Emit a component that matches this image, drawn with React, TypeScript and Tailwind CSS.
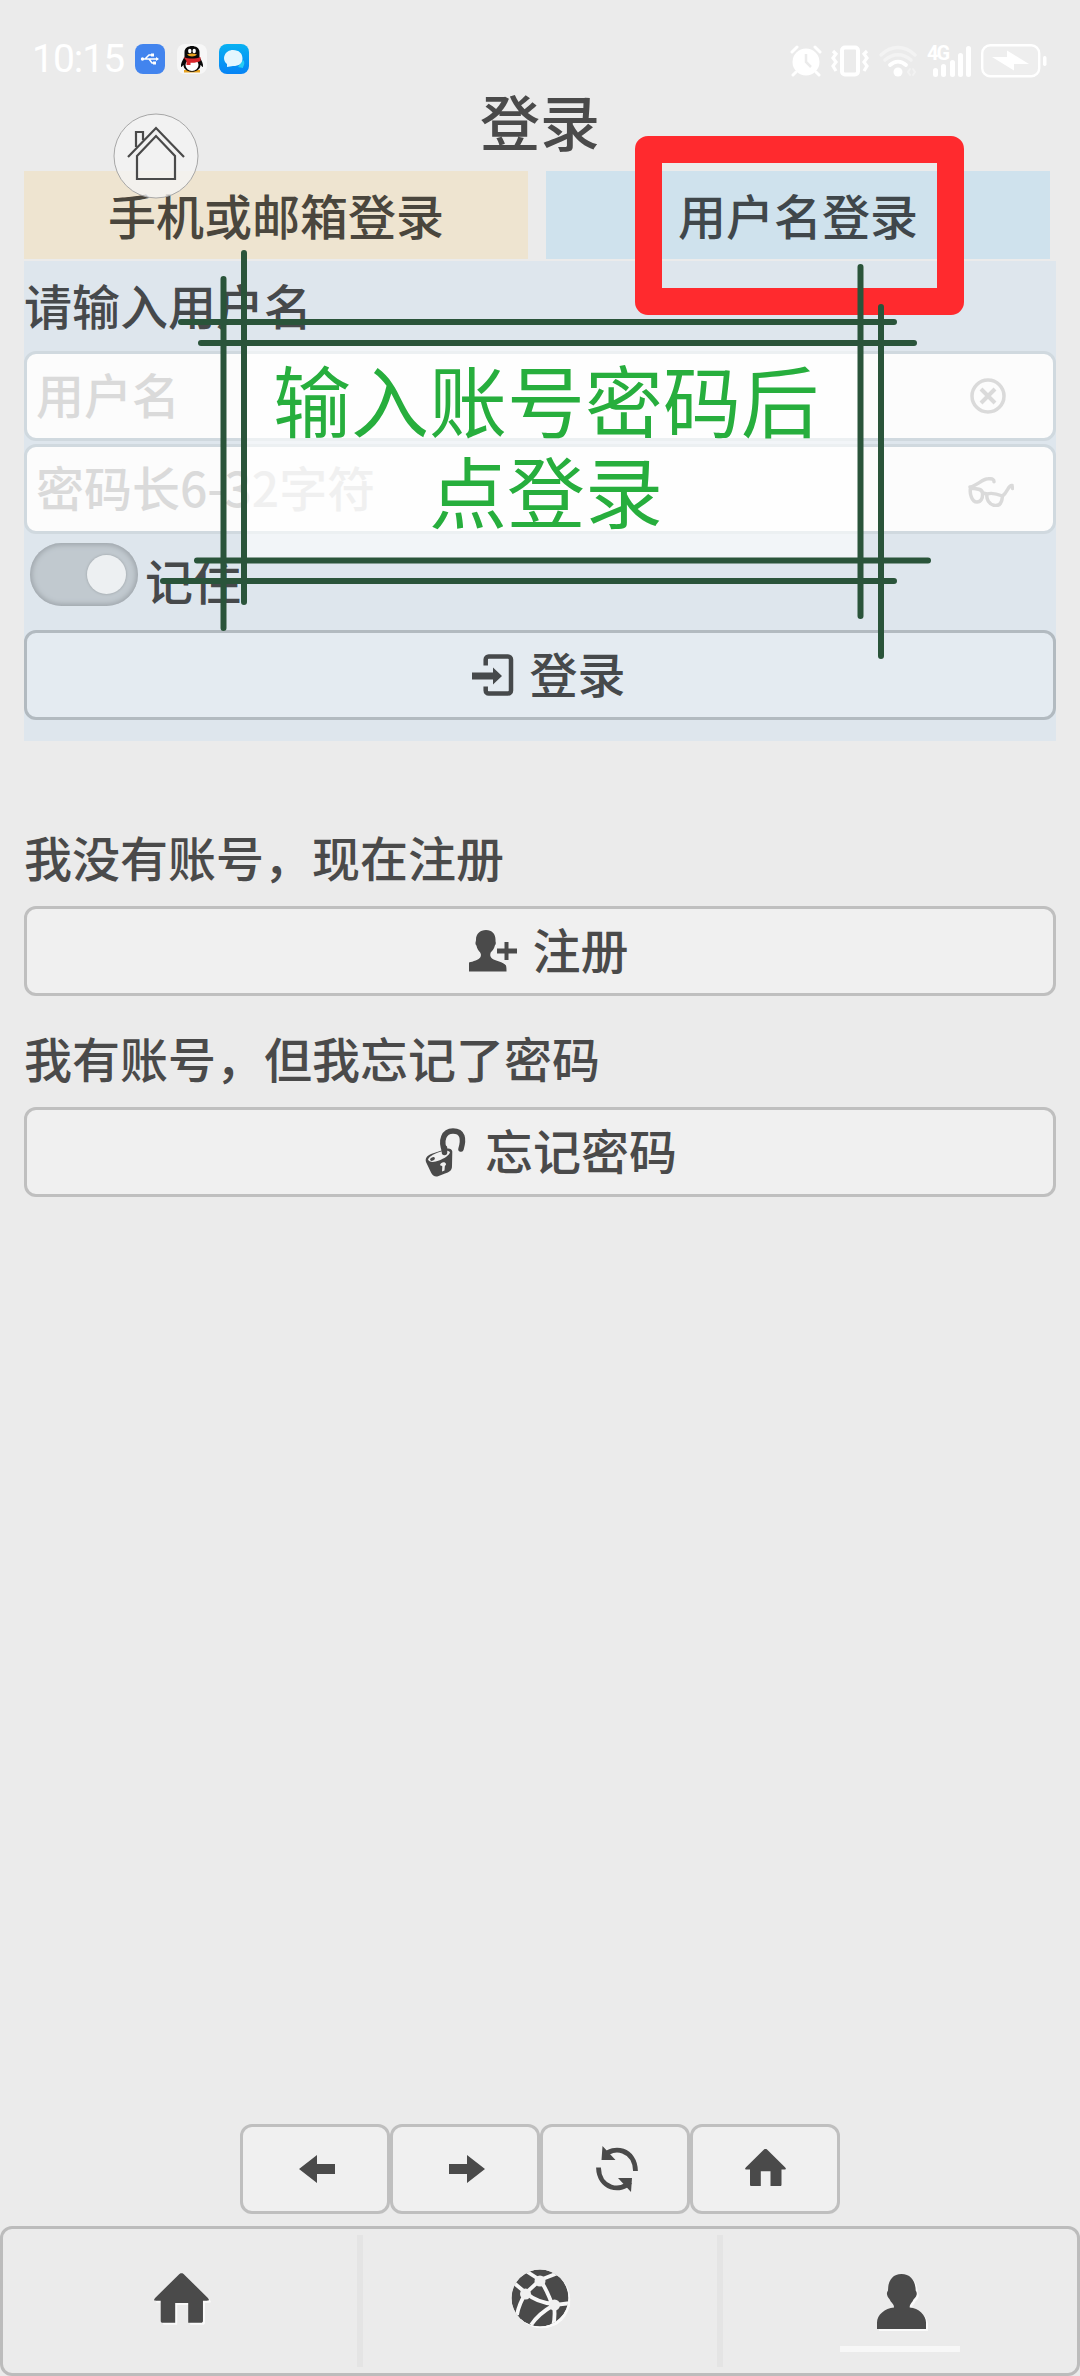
import type { ReactNode } from "react";

const HomeIcon = ({ className }: { className: string }) => (
  <svg viewBox="0 0 41 37" className={className} fill="currentColor">
    <path d="M20.500 0c1 0 1.600.5 2.300 1.300L40 18.300c1.400 1.500 1.200 2.200-.5 2.200H36.500V35.500c0 1-.5 1.500-1.500 1.500H25.500V22.200H15.800V37H6.500C5.500 37 5 36.500 5 35.500V20.500H1.500C-.2 20.500-.4 19.800 1 18.300L18.200 1.300C19 .5 19.500 0 20.500 0Z" />
  </svg>
);

const EnterIcon = () => (
  <svg viewBox="0 0 42 42" className="h-[42px] w-[42px]">
    <path d="M13.700 11.500V5.500a3 3 0 0 1 3-3H36a3 3 0 0 1 3 3v31a3 3 0 0 1-3 3H16.700a3 3 0 0 1-3-3v-4" fill="none" stroke="currentColor" strokeWidth="4.500" />
    <path d="M0 18.500h21v-5l9 8.500-9 8.500v-5H0Z" fill="currentColor" />
  </svg>
);

const AddUserIcon = () => (
  <svg viewBox="0 0 48 42" className="h-[42px] w-12" fill="currentColor">
    <path d="M17 0c6 0 9.500 4 9.500 9.500 0 1.300 0 2 .3 3 .2 1.500-.5 2.500-1 3.200-.6 2.800-2.300 5-4 6.500-1 2.300-.6 4.200.7 5.800 3.500 3.500 12 3.500 14.500 7.500.5 2 .5 3.500.5 6H0v-9c4-1 10-2.500 11.500-5.500.7-1.700.6-3.200-.5-4.800-1.500-1.500-3-3.500-3.500-6.500-.7-.7-1.200-1.700-1-3.200.3-1 .5-1.700.5-3C7 4 11 0 17 0Z" />
    <path d="M35.500 12h4v6.500H48v5h-8.500V30h-4v-6.500H28v-5h7.500Z" />
  </svg>
);

const LockIcon = () => (
  <svg viewBox="0 0 42 49" className="h-[49px] w-[42px]">
    <path d="M20 24C15 12 19 3 28 3c10 0 11 8 8 18" fill="none" stroke="currentColor" strokeWidth="5.500" strokeLinecap="round" />
    <path d="M1 34C0 30 2 28 6 26l15-5c3-1 6 0 6.300 2.500L27 38c0 5-3 6-7 7.500l-7 2.700c-3 .8-5.500-.7-7-3.700Z" fill="currentColor" />
    <path d="M3 31.500c1-3 5-5 10-7 6-2 11-2.500 12 0-1 3-6 6-11 8s-10 2-11-1Z" fill="#f0f0f0" />
    <ellipse cx="7.500" cy="31" rx="2.600" ry="1.600" transform="rotate(-25 7.500 31)" fill="currentColor" />
    <path d="M19.500 20v4.500" stroke="currentColor" strokeWidth="5.500" strokeLinecap="round" />
    <path d="M15 37c1-3.500 5.500-3.500 6-1 .2 1-1 1.500-1.200 2.500l-.3 4-2.500 1 .3-5c0-1-1.800-.5-2.300-1.500Z" fill="#f0f0f0" />
  </svg>
);

const ArrowIcon = ({ className = "" }: { className?: string }) => (
  <svg viewBox="0 0 36 28" className={`ml-1 h-7 w-9 ${className}`} fill="currentColor">
    <path d="M0 14 18 0v9h18v10H18v9Z" />
  </svg>
);

const RefreshIcon = () => (
  <svg viewBox="0 0 42 46" className="ml-[3px] h-[46px] w-[42px]">
    <path d="M8 10C17-1 39 3 39.500 25M34 36C25 47 3 43 2.500 21.500" fill="none" stroke="currentColor" strokeWidth="4.800" />
    <path d="M6.500 0 5.500 14h14ZM35 46l1-14H22Z" fill="currentColor" />
  </svg>
);

const GlobeIcon = () => (
  <svg viewBox="0 0 58 58" className="h-[58px] w-[58px] drop-shadow-[2px_2px_0_#fafafa]">
    <defs>
      <clipPath id="globe">
        <circle cx="29" cy="29" r="28.500" />
      </clipPath>
    </defs>
    <g clipPath="url(#globe)">
      <circle cx="29" cy="29" r="28.500" fill="currentColor" />
      <g fill="none" stroke="#f7f7f7" strokeWidth="3.800">
        <path d="M15 2 29 11 47 4M29 11 15 24 3 14M15 24C9 33 7 40 6 46M15 24c8 7 16 10 28 11M29 11c6 8 9 16 12 24M60 34 43 36C34 41 26 47 20 56M43 36c1 8 1 14-1 22M43 36M60 38C56 46 51 50 46 54" />
      </g>
      <circle cx="29" cy="12" r="5.500" fill="#f0f0f0" />
      <circle cx="14.500" cy="25" r="5.500" fill="#f0f0f0" />
      <circle cx="43.500" cy="36" r="5.500" fill="#f0f0f0" />
    </g>
  </svg>
);

const PersonIcon = () => (
  <svg viewBox="0 0 49 55" className="ml-[3px] h-[55px] w-[49px] drop-shadow-[2px_2px_0_#fafafa]" fill="currentColor">
    <path d="M24.500 0C33 0 38.500 6 38.700 16.500c.5 1 1.300 2 1 4-.5 3-3 4-4 6.500-1 2-3 3-3 6.500 9 .5 16.300 8 16.300 15V55H0v-6.500C0 41 8 34 17 33.500c0-3.500-2.500-4.500-3.500-6.500-1-2.500-3-3.500-3.500-6.500-.3-2 .5-3 1-4C11 6 16 0 24.500 0Z" />
  </svg>
);

const StatusBar = () => (
  <div className="flex h-[78px] items-end justify-between pl-8 pr-[33px] text-white">
    <div className="flex items-center">
      <span className="w-[103px] font-[Roboto] text-[39px] leading-[38px] font-normal tracking-[-1px]">10:15</span>
      <svg viewBox="0 0 30 30" className="h-[30px] w-[30px]">
        <rect width="30" height="30" rx="8" fill="#4284ee" />
        <g fill="none" stroke="#fff" strokeWidth="1.500">
          <path d="M7 15h16M10 15l4-4h3M14 15l3 4h2" />
        </g>
        <circle cx="7.500" cy="15" r="1.700" fill="#fff" />
        <path d="m21 13 3 2-3 2Z" fill="#fff" />
        <rect x="16" y="9.500" width="3" height="3" fill="#fff" />
        <rect x="18" y="17.500" width="3" height="3" fill="#fff" />
      </svg>
      <svg viewBox="0 0 30 30" className="ml-3 h-[30px] w-[30px]">
        <rect width="30" height="30" rx="8" fill="#f7f7f7" />
        <path d="M7 26h16v2.500H7Z" fill="#e8a321" />
        <path d="M7.500 8c0-8 15-8 15 0v5c2 3 4 7 3.500 10-1 0-2-2-2.500-2 0 9-17 9-17 0-.5 0-1.500 2-2.500 2C3.500 20 5.500 16 7.500 13Z" fill="#090909" />
        <ellipse cx="15" cy="21" rx="6.500" ry="6" fill="#fff" />
        <ellipse cx="12.800" cy="7" rx="1.700" ry="2.200" fill="#fff" />
        <ellipse cx="17.200" cy="7" rx="1.700" ry="2.200" fill="#fff" />
        <path d="M10 10.500c3-1.500 7-1.500 10 0-2 2.500-8 2.500-10 0Z" fill="#e8a321" />
        <path d="M6.500 13c5 2 12 2 17 0v4c-3 1.500-7 2-10 1.700V21h-4v-4Z" fill="#d8262b" />
      </svg>
      <svg viewBox="0 0 30 30" className="ml-3 h-[30px] w-[30px]">
        <defs>
          <linearGradient id="chat" x2="0" y2="1">
            <stop stopColor="#08b1f2" />
            <stop offset="1" stopColor="#0683f5" />
          </linearGradient>
        </defs>
        <rect width="30" height="30" rx="8" fill="url(#chat)" />
        <path d="M24 16c3 3 0 6 0 8l-5-1Z" fill="#27cdf4" />
        <path d="M14 6c6 0 9.500 3.500 9.500 8.500S20 22 14 22l-6 1v-3c-6-5-2-14 6-14Z" fill="#e4f6fe" />
      </svg>
    </div>
    <div className="flex items-center">
      <svg viewBox="0 0 32 32" className="h-8 w-8">
        <circle cx="16" cy="17" r="13.500" fill="#fff" />
        <path d="m2 7 5-5M30 7l-5-5M6 27l-3 3M26 27l3 3" stroke="#fff" strokeWidth="3" strokeLinecap="round" />
        <path d="M16 9v8l5 5" fill="none" stroke="#ebebeb" strokeWidth="2.500" />
      </svg>
      <svg viewBox="0 0 38 32" className="ml-[9px] h-8 w-[38px]" fill="none" stroke="#fff">
        <rect x="11" y="2.500" width="16" height="27" rx="3" strokeWidth="4" />
        <path d="m2 6 3 3-3 4 3 4-3 4 3 5M36 6l-3 3 3 4-3 4 3 4-3 5" strokeWidth="3.200" />
      </svg>
      <svg viewBox="0 0 40 32" className="ml-[9px] h-8 w-10" fill="none" strokeLinecap="round">
        <path d="M3 10C13 0 27 0 37 10M7 15c8-7 18-7 26 0" stroke="#f3f3f3" strokeWidth="3.500" />
        <path d="M12 20c5-4.500 11-4.500 16 0" stroke="#fff" strokeWidth="3.800" />
        <circle cx="20" cy="27" r="4.500" fill="#fff" />
        <path d="m32 24-2 3 2 3m3-6 2 3-2 3" stroke="#f2f2f2" strokeWidth="2" />
      </svg>
      <div className="relative ml-[9px] h-8 w-[45px]">
        <span className="absolute left-0 top-0 font-[Roboto] text-[20px] font-bold leading-4 tracking-[-2px]">4G</span>
        <div className="flex h-8 items-end gap-[3.300px] pl-[6px]">
          <i className="h-[9px] w-[5px] rounded-full bg-white" />
          <i className="h-[13px] w-[5px] rounded-full bg-white" />
          <i className="h-[17px] w-[5px] rounded-full bg-white" />
          <i className="h-6 w-[5px] rounded-full bg-white" />
          <i className="h-[31px] w-[5px] rounded-full bg-white" />
        </div>
      </div>
      <svg viewBox="0 0 66 34" className="ml-[9px] h-[34px] w-[66px]">
        <rect x="1.200" y="1.200" width="57" height="31" rx="8" fill="#eee" stroke="#fff" strokeWidth="2.400" />
        <path d="M11 13h15V6.500L48 20H33v6.500Z" fill="#fff" />
        <rect x="62" y="12" width="3.500" height="10" rx="1.700" fill="#fff" />
      </svg>
    </div>
  </div>
);

const Field = ({ placeholder, children }: { placeholder: string; children: ReactNode }) => (
  <div className="flex h-[90px] items-center justify-between rounded-xl border-[3px] border-[#d0d9df] bg-[#fcfcfc] pl-[9px] pr-[39px] text-[#dadada]">
    <span className="pb-1.5">{placeholder}</span>
    {children}
  </div>
);

const App = () => (
  <main className="relative flex h-[2376px] w-[1080px] flex-col overflow-hidden bg-[#ebebeb] font-['Noto_Sans_CJK_SC','Noto_Sans',sans-serif] text-5xl leading-[72px] font-medium text-[#4a4a4a]">
    <StatusBar />
    <h1 className="h-[93px] text-center text-[60px] leading-[84px]">登录</h1>

    <section className="px-6">
      <div className="flex h-[90px] gap-[18px] text-center leading-[86px]">
        <div className="h-[88px] w-[504px] bg-[#eee4d0] text-[#4a463d]">手机或邮箱登录</div>
        <div className="h-[88px] w-[504px] bg-[#cfe2ed] text-[#40474b]">用户名登录</div>
      </div>
      <div className="h-[480px] bg-[#dee6ed] text-[#46494b]">
        <p className="h-[90px] leading-[86px]">请输入用户名</p>
        <div className="flex flex-col gap-[3px]">
          <Field placeholder="用户名">
            <svg viewBox="0 0 36 36" className="mr-[8px] h-9 w-9" fill="none" stroke="currentColor">
              <circle cx="18" cy="18" r="16" strokeWidth="3.500" />
              <path d="m11 11 14 14m0-14L11 25" strokeWidth="4" />
            </svg>
          </Field>
          <Field placeholder="密码长6-32字符">
            <svg viewBox="0 0 46 30" className="mt-1.5 h-[30px] w-[46px]" fill="none" stroke="currentColor" strokeWidth="3.500" strokeLinecap="round">
              <path d="M2.500 11c-1 5 1 14 6.500 14 4 0 6-4 5.500-9S7 12 2.500 11ZM19 17c-1 5 2 11 8 11.500 5 .5 7-3 7.500-9.500-5-2-11-3.500-15.500-2ZM15 16l4 1M2 10C9 9 14 2 20 1.800c5-.5 6 1 6 3M34.500 19C40 15 40 8 44 8.500l.5 3" />
            </svg>
          </Field>
        </div>
        <div className="flex h-24 pl-1.5 pt-[9px]">
          <div className="flex h-[63px] w-[108px] items-center justify-end rounded-full bg-[#c1c9cf] pr-3 shadow-[inset_0_0_5px_2px_#9fa6ac]">
            <div className="h-[39px] w-[39px] rounded-full bg-[#edf0f2] shadow-[0_0_2px_1px_#aeb5ba]" />
          </div>
          <span className="ml-[7px]">记住</span>
        </div>
        <div className="flex h-[90px] items-center justify-center gap-[15px] rounded-xl border-[3px] border-[#b2bac0] bg-[#e4ebf1] pl-[18px]">
          <EnterIcon />
          <span className="pb-1.5">登录</span>
        </div>
      </div>

      <p className="mt-[74px] h-[91px] leading-[83px]">我没有账号，现在注册</p>
      <div className="flex h-[90px] items-center justify-center gap-[15px] rounded-xl border-[3px] border-[#bfbfbf] bg-[#f0f0f0] pl-[18px]">
        <AddUserIcon />
        <span className="pb-1.5">注册</span>
      </div>
      <p className="mt-5 h-[91px] leading-[83px]">我有账号，但我忘记了密码</p>
      <div className="flex h-[90px] items-center justify-center gap-[18px] rounded-xl border-[3px] border-[#bfbfbf] bg-[#f0f0f0] pl-[22px]">
        <LockIcon />
        <span className="pb-1.5">忘记密码</span>
      </div>
    </section>

    <nav className="mt-auto mb-3 flex justify-center">
      {[<ArrowIcon />, <ArrowIcon className="rotate-180" />, <RefreshIcon />, <HomeIcon className="mt-[-3px] h-[37px] w-[41px]" />].map((icon, i) => (
        <div key={i} className="flex h-[90px] w-[150px] items-center justify-center rounded-xl border-[3px] border-[#bfbfbf] bg-[#f0f0f0]">
          {icon}
        </div>
      ))}
    </nav>

    <footer className="flex h-[150px] items-center rounded-xl border-[3px] border-[#bcbcbc]">
      <div className="flex h-full flex-1 items-center justify-center pb-1.5">
        <HomeIcon className="ml-0.5 h-[50px] w-[55px] drop-shadow-[2px_2px_0_#fafafa]" />
      </div>
      <div className="flex h-[132px] w-[366px] items-center justify-center border-x-[6px] border-[#e4e4e4] pb-1.5">
        <GlobeIcon />
      </div>
      <div className="relative flex h-full flex-1 items-center justify-center">
        <PersonIcon />
        <div className="absolute bottom-[21px] h-1.5 w-[120px] bg-[#f7f7f7]" />
      </div>
    </footer>

    {/* floating home button */}
    <svg viewBox="0 0 86 86" className="absolute left-[113px] top-[113px] h-[86px] w-[86px]">
      <circle cx="43" cy="43" r="42" fill="#f4f4f4" fillOpacity="0.800" stroke="#a7a7a7" />
      <path d="m15 44 28-29 28 29M23 34V19h7v8M24 43l19-20 19 20v23H24Z" fill="none" stroke="#4a4a4a" strokeWidth="2.200" />
    </svg>

    {/* tutorial overlay */}
    <div className="absolute left-[635px] top-[136px] h-[179px] w-[329px] rounded-[13px] border-[27px] border-[#ff2a2e]" />
    <div className="absolute left-[247px] top-[345px] h-[214px] w-[612px] bg-white/60 pr-[14px] pt-2 text-center text-[78px] leading-[91px] font-normal text-[#27ae3d]">
      输入账号密码后
      <br />
      点登录
    </div>
    <svg viewBox="0 0 1080 700" className="absolute left-0 top-0 h-[700px] w-[1080px]">
      <path
        d="M181 322H894M201 343H914M197 560.500H928M163 581H894M223.500 279V628M244 253V602M860.500 267V616M881 307V656"
        fill="none"
        stroke="#2a543a"
        strokeWidth="6"
        strokeLinecap="round"
      />
    </svg>
  </main>
);

export default App;
